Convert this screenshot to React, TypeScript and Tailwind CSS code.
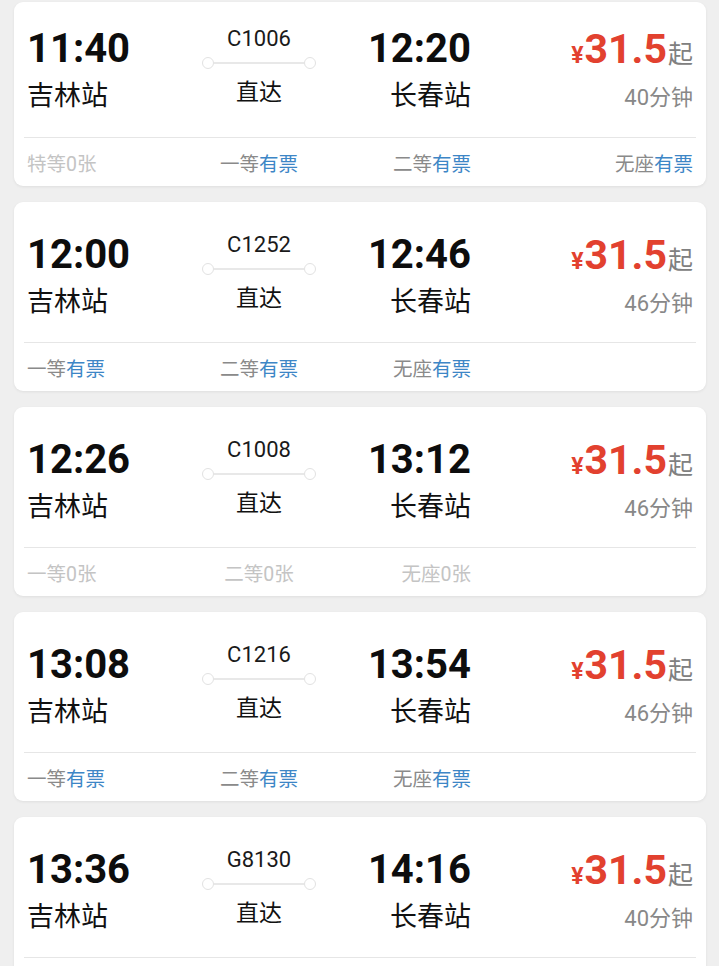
import React from "react";

type Seat = { name: string; count: string };

type Train = {
  depart: string;
  arrive: string;
  code: string;
  duration: string;
  seats: Seat[];
};

const trains: Train[] = [
  {
    depart: "11:40",
    arrive: "12:20",
    code: "C1006",
    duration: "40分钟",
    seats: [
      { name: "特等", count: "0张" },
      { name: "一等", count: "有票" },
      { name: "二等", count: "有票" },
      { name: "无座", count: "有票" },
    ],
  },
  {
    depart: "12:00",
    arrive: "12:46",
    code: "C1252",
    duration: "46分钟",
    seats: [
      { name: "一等", count: "有票" },
      { name: "二等", count: "有票" },
      { name: "无座", count: "有票" },
    ],
  },
  {
    depart: "12:26",
    arrive: "13:12",
    code: "C1008",
    duration: "46分钟",
    seats: [
      { name: "一等", count: "0张" },
      { name: "二等", count: "0张" },
      { name: "无座", count: "0张" },
    ],
  },
  {
    depart: "13:08",
    arrive: "13:54",
    code: "C1216",
    duration: "46分钟",
    seats: [
      { name: "一等", count: "有票" },
      { name: "二等", count: "有票" },
      { name: "无座", count: "有票" },
    ],
  },
  {
    // seat row of this one is below the fold
    depart: "13:36",
    arrive: "14:16",
    code: "G8130",
    duration: "40分钟",
    seats: [],
  },
];

const slotAlign = ["justify-self-start", "justify-self-center", "justify-self-end", "justify-self-end"];

function SeatItem({ seat, index }: { seat: Seat; index: number }) {
  const soldOut = seat.count === "0张";
  return (
    <div className={`${slotAlign[index]} text-[19.5px] leading-none`}>
      {soldOut ? (
        <span className="text-[#c4c4c4]">
          {seat.name}
          {seat.count}
        </span>
      ) : (
        <>
          <span className="text-[#8a8a8a]">{seat.name}</span>
          <span className="text-[#3d86c6]">{seat.count}</span>
        </>
      )}
    </div>
  );
}

function TrainCard({ train, first }: { train: Train; first?: boolean }) {
  return (
    <div className="ml-[14px] mr-[13px] rounded-[9px] bg-white shadow-[0_1px_3px_rgba(0,0,0,0.07)]">
      <div
        className={`grid grid-cols-[150px_164px_130px_1fr] pl-[13px] pr-[13px] ${
          first ? "h-[135px] pt-[27px]" : "h-[140px] pt-[33px]"
        }`}
      >
        {/* departure */}
        <div className="flex flex-col items-start">
          <div className="text-[40px] font-bold leading-[40px] text-[#0d0d0d]">{train.depart}</div>
          <div className="mt-[12px] text-[27px] leading-[30px] text-[#111]">吉林站</div>
        </div>

        {/* train code + route line */}
        <div className="-mt-[3px] flex flex-col items-center">
          <div className="text-[22px] leading-[26px] text-[#1a1a1a]">{train.code}</div>
          <div className="mt-[5px] flex items-center">
            <span className="h-[12px] w-[12px] rounded-full border-[1.5px] border-[#e2e2e2] bg-white" />
            <span className="h-[2px] w-[90px] bg-[#e8e8e8]" />
            <span className="h-[12px] w-[12px] rounded-full border-[1.5px] border-[#e2e2e2] bg-white" />
          </div>
          <div className="mt-[10px] text-[23px] leading-[28px] text-[#111]">直达</div>
        </div>

        {/* arrival */}
        <div className="flex flex-col items-end">
          <div className="text-[40px] font-bold leading-[40px] text-[#0d0d0d]">{train.arrive}</div>
          <div className="mt-[12px] text-[27px] leading-[30px] text-[#111]">长春站</div>
        </div>

        {/* price */}
        <div className="flex flex-col items-end">
          <div className="flex items-baseline leading-[40px]">
            <span className="mr-[1px] text-[23px] font-bold text-[#e2412f]">¥</span>
            <span className="text-[41px] font-bold text-[#e2412f]">31.5</span>
            <span className="ml-[1px] text-[25px] text-[#808080]">起</span>
          </div>
          <div className="mt-[7px] text-[22px] leading-[30px] text-[#888]">{train.duration}</div>
        </div>
      </div>

      <div className="mx-[10px] h-px bg-[#e6e6e6]" />

      <div className="grid h-[48px] grid-cols-[150px_164px_130px_1fr] items-center pl-[13px] pr-[13px] pt-[6px]">
        {train.seats.map((seat, i) => (
          <SeatItem key={seat.name} seat={seat} index={i} />
        ))}
      </div>
    </div>
  );
}

export default function App() {
  return (
    <div
      className="h-[966px] w-full overflow-hidden bg-[#efefef]"
      style={{ fontFamily: 'Roboto, "Noto Sans CJK SC", sans-serif' }}
    >
      <div className="flex flex-col gap-[16px] pt-[2px]">
        {trains.map((t, i) => (
          <TrainCard key={t.code} train={t} first={i === 0} />
        ))}
      </div>
    </div>
  );
}
